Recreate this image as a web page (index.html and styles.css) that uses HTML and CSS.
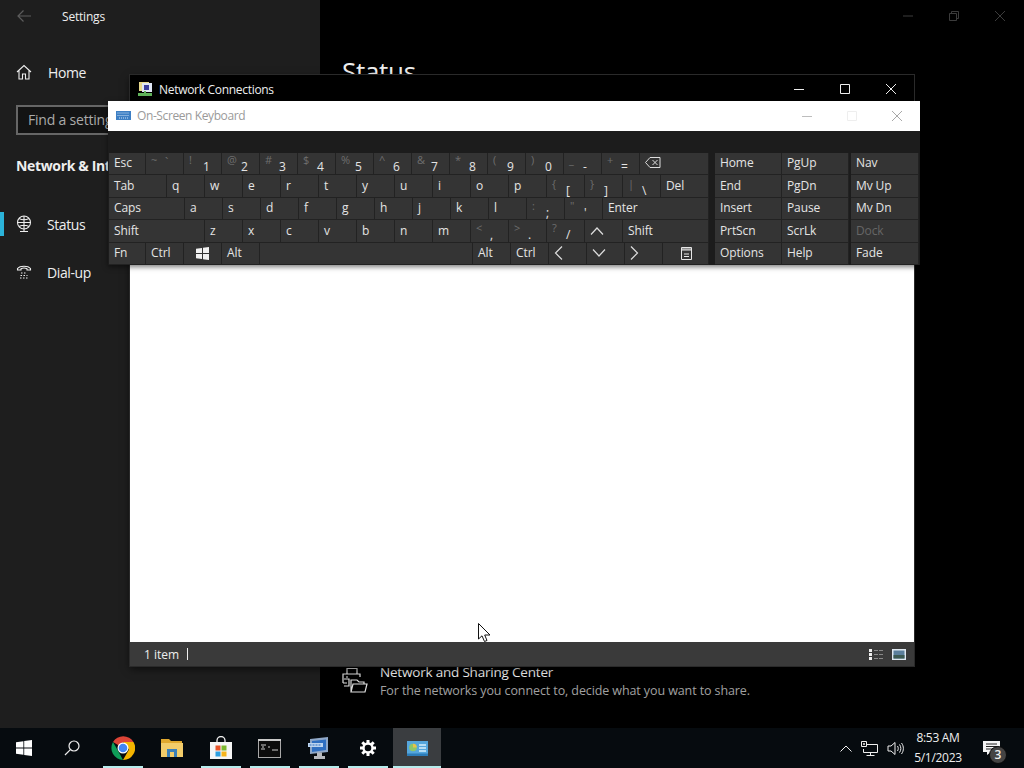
FILE: index.html
```html
<!DOCTYPE html>
<html lang="en">
<head>
	<meta charset="UTF-8">
	<title>On-Screen Keyboard</title>
	<link rel="stylesheet" href="styles.css">
</head>
<body>
	<div class="desktop">
		<div class="settings">
			<div class="sidebar">
				<div class="appTitle">
					<svg class="back" width="16" height="16" viewBox="0 0 16 16" fill="none" stroke="#5c5c5c" stroke-width="1.2"><path d="M15 8H2M7.500 2.500 2 8l5.500 5.500"/></svg>
					<span>Settings</span>
				</div>
				<div class="navItem homeItem">
					<svg width="16" height="16" viewBox="0 0 16 16" fill="none" stroke="#eee" stroke-width="1.100"><path d="M1 8 8 1.500 15 8M3 6.500V15H6.500V10H9.500V15H13V6.500"/></svg>
					<span>Home</span>
				</div>
				<div class="search">Find a setting</div>
				<h4 class="section">Network &amp; Internet</h4>
				<div class="navItem statusItem">
					<svg width="16" height="18" viewBox="0 0 16 18" fill="none" stroke="#eee" stroke-width="1.100"><circle cx="8" cy="7.500" r="6.500"/><path d="M1.500 7.500h13M8 1v13M3 3.500c3 1.500 7 1.500 10 0M3 11.500c3-1.500 7-1.500 10 0M4 16.500h8M8 14v2.500"/></svg>
					<span>Status</span>
				</div>
				<div class="navItem dialItem">
					<svg width="16" height="16" viewBox="0 0 16 16" fill="none" stroke="#eee" stroke-width="1.100"><path d="M1.500 6V4.500C4 1.500 12 1.500 14.500 4.500V6H11V4.800C9.500 4 6.500 4 5 4.800V6Z"/><path stroke-dasharray="1.500 1.500" d="M5 9h6M4.500 11.500h7M4 14h8"/></svg>
					<span>Dial-up</span>
				</div>
			</div>
			<div class="main">
				<div class="winBtns dim">
					<svg width="10" height="10" viewBox="0 0 10 10"><path d="M0 5h10" stroke="#3c3c3c"/></svg>
					<svg width="10" height="10" viewBox="0 0 10 10" fill="none" stroke="#3c3c3c"><path d="M.5 2.500h7v7h-7zM2.500 2.500v-2h7v7h-2"/></svg>
					<svg width="10" height="10" viewBox="0 0 10 10"><path d="M0 0l10 10M10 0 0 10" stroke="#3c3c3c"/></svg>
				</div>
				<h1 class="pageTitle">Status</h1>
				<div class="related">
					<svg width="26" height="26" viewBox="0 0 26 26" fill="none" stroke="#ddd" stroke-width="1.200"><path d="M5 7V1.500H15V7M1 16V7H18V10M1 16H5M2 19H7V12H2M4 10h2"/><path d="M9 25 11 17H25L23 25ZM9 25V13H15L17 15H22V17"/></svg>
					<div>
						<div class="relatedTitle">Network and Sharing Center</div>
						<div class="relatedSub">For the networks you connect to, decide what you want to share.</div>
					</div>
				</div>
			</div>
		</div>

		<div class="explorer">
			<div class="exTitle">
				<svg width="16" height="16" viewBox="0 0 16 16"><rect x="2" y="1" width="10" height="9" fill="#e8d88c"/><rect x="5" y="2" width="10" height="9" fill="#dfe6f5"/><rect x="7" y="4" width="5" height="5" fill="#3c3f9e"/><rect x="1" y="12" width="14" height="3" fill="#5fb25a"/><rect x="7" y="10" width="2" height="3" fill="#5fb25a"/></svg>
				<span class="exName">Network Connections</span>
				<div class="winBtns">
					<svg width="10" height="10" viewBox="0 0 10 10"><path d="M0 5.500h10" stroke="#eee"/></svg>
					<svg width="10" height="10" viewBox="0 0 10 10" fill="none" stroke="#eee"><path d="M.5.500h9v9h-9z"/></svg>
					<svg width="10" height="10" viewBox="0 0 10 10"><path d="M0 0l10 10M10 0 0 10" stroke="#eee"/></svg>
				</div>
			</div>
			<div class="exBody"></div>
			<div class="exStatus">
				<span>1 item</span>
				<i class="sep"></i>
				<span class="spring"></span>
				<svg width="16" height="12" viewBox="0 0 16 12"><path d="M1 1h3v3H1zM1 5h3v3H1zM1 9h3v3H1z" fill="#eee"/><path d="M6 2.500h4M11 2.500h4M6 6.500h4M11 6.500h4M6 10.500h4M11 10.500h4" stroke="#888"/></svg>
				<svg class="viewTile" width="14" height="11" viewBox="0 0 14 11"><rect width="14" height="11" fill="#dfe8f0"/><rect x="1.500" y="1.500" width="11" height="8" fill="#5b7f9c"/><rect x="1.500" y="6" width="11" height="3.500" fill="#3d5a52"/></svg>
			</div>
		</div>

		<div class="osk">
			<div class="oskTitle">
				<svg width="15" height="9" viewBox="0 0 15 9"><rect width="15" height="9" fill="#3d7fc4"/><path d="M1.500 2h12M1.500 4.500h12M3 7h9" stroke="#cfe3f7" stroke-dasharray="1 1"/></svg>
				<span class="oskName">On-Screen Keyboard</span>
				<div class="winBtns">
					<svg width="10" height="10" viewBox="0 0 10 10"><path d="M0 5.500h10" stroke="#bdbdbd"/></svg>
					<svg width="10" height="10" viewBox="0 0 10 10" fill="none" stroke="#eee"><path d="M.5.500h9v9h-9z"/></svg>
					<svg width="10" height="10" viewBox="0 0 10 10"><path d="M0 0l10 10M10 0 0 10" stroke="#a8a8a8"/></svg>
				</div>
			</div>
			<div class="oskBody">
				<div class="keys">
					<div class="row">
						<div class="key w37">Esc</div>
						<div class="key pair"><span class="sup">~</span><span class="dim">`</span></div>
						<div class="key pair"><span class="sup">!</span><span class="dig">1</span></div>
						<div class="key pair"><span class="sup">@</span><span class="dig">2</span></div>
						<div class="key pair"><span class="sup">#</span><span class="dig">3</span></div>
						<div class="key pair"><span class="sup">$</span><span class="dig">4</span></div>
						<div class="key pair"><span class="sup">%</span><span class="dig">5</span></div>
						<div class="key pair"><span class="sup">^</span><span class="dig">6</span></div>
						<div class="key pair"><span class="sup">&amp;</span><span class="dig">7</span></div>
						<div class="key pair"><span class="sup">*</span><span class="dig">8</span></div>
						<div class="key pair"><span class="sup">(</span><span class="dig">9</span></div>
						<div class="key pair"><span class="sup">)</span><span class="dig">0</span></div>
						<div class="key pair"><span class="sup">_</span><span class="dig">-</span></div>
						<div class="key pair"><span class="sup">+</span><span class="dig">=</span></div>
						<div class="key grow">
							<svg width="16" height="11" viewBox="0 0 16 11" fill="none" stroke="#ddd"><path d="M5 .500H15V10.500H5L.500 5.500ZM7.500 3l5 5M12.500 3l-5 5"/></svg>
						</div>
					</div>
					<div class="row">
						<div class="key w58">Tab</div>
						<div class="key">q</div>
						<div class="key">w</div>
						<div class="key">e</div>
						<div class="key">r</div>
						<div class="key">t</div>
						<div class="key">y</div>
						<div class="key">u</div>
						<div class="key">i</div>
						<div class="key">o</div>
						<div class="key">p</div>
						<div class="key pair"><span class="sup">{</span><span class="dig">[</span></div>
						<div class="key pair"><span class="sup">}</span><span class="dig">]</span></div>
						<div class="key pair"><span class="sup">|</span><span class="dig">\</span></div>
						<div class="key grow">Del</div>
					</div>
					<div class="row">
						<div class="key w76">Caps</div>
						<div class="key">a</div>
						<div class="key">s</div>
						<div class="key">d</div>
						<div class="key">f</div>
						<div class="key">g</div>
						<div class="key">h</div>
						<div class="key">j</div>
						<div class="key">k</div>
						<div class="key">l</div>
						<div class="key pair"><span class="sup">:</span><span class="dig">;</span></div>
						<div class="key pair"><span class="sup">"</span><span class="dig">'</span></div>
						<div class="key grow">Enter</div>
					</div>
					<div class="row">
						<div class="key w96">Shift</div>
						<div class="key">z</div>
						<div class="key">x</div>
						<div class="key">c</div>
						<div class="key">v</div>
						<div class="key">b</div>
						<div class="key">n</div>
						<div class="key">m</div>
						<div class="key pair"><span class="sup">&lt;</span><span class="dig">,</span></div>
						<div class="key pair"><span class="sup">&gt;</span><span class="dig">.</span></div>
						<div class="key pair"><span class="sup">?</span><span class="dig">/</span></div>
						<div class="key">
							<svg width="14" height="8" viewBox="0 0 14 8" fill="none" stroke="#ddd" stroke-width="1.200"><path d="M1 7.500 7 1l6 6.500"/></svg>
						</div>
						<div class="key grow">Shift</div>
					</div>
					<div class="row">
						<div class="key w37">Fn</div>
						<div class="key">Ctrl</div>
						<div class="key winKey">
							<svg width="13" height="13" viewBox="0 0 13 13" fill="#f2f2f2"><path d="M0 1.800 6 1V6H0ZM7 .8 13 0V6H7ZM0 7H6V12L0 11.200ZM7 7H13V13L7 12.200Z"/></svg>
						</div>
						<div class="key">Alt</div>
						<div class="key space"></div>
						<div class="key">Alt</div>
						<div class="key">Ctrl</div>
						<div class="key">
							<svg width="9" height="14" viewBox="0 0 9 14" fill="none" stroke="#ddd" stroke-width="1.200"><path d="M8 .5 1.500 7 8 13.500"/></svg>
						</div>
						<div class="key">
							<svg width="14" height="8" viewBox="0 0 14 8" fill="none" stroke="#ddd" stroke-width="1.200"><path d="M1 .5 7 7l6-6.500"/></svg>
						</div>
						<div class="key">
							<svg width="9" height="14" viewBox="0 0 9 14" fill="none" stroke="#ddd" stroke-width="1.200"><path d="M1 .5 7.500 7 1 13.500"/></svg>
						</div>
						<div class="key grow menuKey">
							<svg width="11" height="13" viewBox="0 0 11 13" fill="none" stroke="#e6e6e6"><path d="M.5.500h10v12H.5zM.5 3h10M.5 2h10M3 7h5M3 9.500h5"/></svg>
						</div>
					</div>
				</div>
				<div class="navKeys">
					<div class="key">Home</div><div class="key">PgUp</div><div class="key side">Nav</div>
					<div class="key">End</div><div class="key">PgDn</div><div class="key side">Mv Up</div>
					<div class="key">Insert</div><div class="key">Pause</div><div class="key side">Mv Dn</div>
					<div class="key">PrtScn</div><div class="key">ScrLk</div><div class="key side off">Dock</div>
					<div class="key">Options</div><div class="key">Help</div><div class="key side">Fade</div>
				</div>
			</div>
		</div>

		<svg class="cursor" width="13" height="19" viewBox="0 0 13 19"><path d="M.5.500V16L4 12.800 6.500 18.500 9 17.500 6.700 12H12Z" fill="#fff" stroke="#111"/></svg>

		<div class="taskbar">
			<div class="tbBtn startBtn">
				<svg width="16" height="16" viewBox="0 0 16 16" fill="#fff"><path d="M0 2.200 7.400 1.200V7.600H0ZM8.200 1 16 0V7.600H8.200ZM0 8.400H7.400V14.800L0 13.800ZM8.200 8.400H16V16L8.200 15Z"/></svg>
			</div>
			<div class="tbBtn searchBtn">
				<svg width="16" height="16" viewBox="0 0 16 16" fill="none" stroke="#eee" stroke-width="1.200"><circle cx="10" cy="6" r="5"/><path d="M6.400 9.600 1 15"/></svg>
			</div>
			<div class="tbBtn running">
				<svg width="24" height="24" viewBox="0 0 24 24"><path d="M12 12 2 6a12 12 0 0 1 20.500 0H12Z" fill="#dc4437"/><path d="M12 24A12 12 0 0 1 2 6l6 10.500Z" fill="#0f9d58"/><path d="M22.500 6A12 12 0 0 1 12 24l6-10.500L12 6Z" fill="#f4b400"/><circle cx="12" cy="12" r="5.500" fill="#fff"/><circle cx="12" cy="12" r="4.300" fill="#4285f4"/></svg>
			</div>
			<div class="tbBtn folderBtn">
				<svg width="22" height="20" viewBox="0 0 22 20"><path d="M0 1H8L10 3H21V6H0Z" fill="#e0a82e"/><rect y="5" width="22" height="14" fill="#f2cc6a"/><rect x="6" y="11" width="10" height="8" fill="#3b7fb8"/><rect x="9" y="14" width="4" height="5" fill="#f2cc6a"/></svg>
			</div>
			<div class="tbBtn running">
				<svg width="24" height="24" viewBox="0 0 24 24"><path d="M8 7V4.500a4 4 0 0 1 8 0V7" fill="none" stroke="#eee" stroke-width="1.300"/><rect x="1" y="6" width="22" height="17" fill="#f6f6f6"/><rect x="6.500" y="9.500" width="5" height="5" fill="#e8542a"/><rect x="12.500" y="9.500" width="5" height="5" fill="#7cb82f"/><rect x="6.500" y="15.500" width="5" height="5" fill="#2e9fe0"/><rect x="12.500" y="15.500" width="5" height="5" fill="#f6b51c"/></svg>
			</div>
			<div class="tbBtn running">
				<svg width="23" height="19" viewBox="0 0 23 19"><rect x=".5" y=".5" width="22" height="18" fill="#0c0c0c" stroke="#a8a8a8"/><path d="M0 0h23v2H0z" fill="#c9c9c9"/><path d="M3 6h5M4 8h2M10 8h2M3 10h4M14 11h6" stroke="#ccc"/></svg>
			</div>
			<div class="tbBtn running">
				<svg width="24" height="24" viewBox="0 0 24 24"><path d="M3 3 21 1V16L3 18Z" fill="#8fa8c8"/><path d="M5 5 19 3.500V14L5 16Z" fill="#2f6fc0"/><path d="M1 7H16V11H1Z" fill="#bcd4ee"/><path d="M2.500 9h12" stroke="#2f6fc0" stroke-dasharray="2 1"/><path d="M10 16.500h5V20h3v3H7V20h3Z" fill="#b5b8bd"/></svg>
			</div>
			<div class="tbBtn running">
				<svg width="18" height="18" viewBox="0 0 18 18"><path d="M9 1v3M9 14v3M1 9h3M14 9h3M3.300 3.300l2.200 2.200M12.500 12.500l2.200 2.200M14.700 3.300l-2.200 2.200M5.500 12.500l-2.200 2.200" stroke="#fff" stroke-width="3"/><circle cx="9" cy="9" r="4.500" fill="none" stroke="#fff" stroke-width="2.400"/></svg>
			</div>
			<div class="tbBtn active">
				<svg width="21" height="15" viewBox="0 0 21 15"><rect width="21" height="15" fill="#55a6dc"/><circle cx="6" cy="6.500" r="3.800" fill="#8cc66a"/><path d="M6 6.500V2.700a3.800 3.800 0 0 1 3.800 3.800Z" fill="#e8c24a"/><path d="M12 4h7M12 7h7M12 10h7" stroke="#d8effa" stroke-width="1.300"/><rect y="12.500" width="21" height="2.500" fill="#2c7cb8"/></svg>
			</div>
			<div class="spring"></div>
			<div class="tray">
				<svg width="12" height="7" viewBox="0 0 12 7" fill="none" stroke="#eee"><path d="M.5 6.500 6 1l5.500 5.500"/></svg>
				<svg width="17" height="15" viewBox="0 0 17 15" fill="none" stroke="#eee"><path d="M4 3.500H16.500V11.500H2.500V8M9.500 11.500V14.500M5.500 14.500H13.500"/><path d="M.5.500h5v5h-5z" fill="#0a0e12"/><circle cx="3" cy="3" r="1" fill="#eee" stroke="none"/></svg>
				<svg width="17" height="15" viewBox="0 0 17 15" fill="none" stroke="#eee"><path d="M1 5V10H4L8 13.500V1.500L4 5ZM10.500 5c1 1.500 1 3.500 0 5M12.500 3.500c1.800 2.500 1.800 5.500 0 8M14.500 2c2.500 3.500 2.500 7.500 0 11"/></svg>
			</div>
			<div class="clock">
				<div>8:53 AM</div>
				<div>5/1/2023</div>
			</div>
			<div class="notify">
				<svg width="17" height="14" viewBox="0 0 17 14"><path d="M0 0H17V11H8L4 14V11H0Z" fill="#f4f4f4"/><path d="M3 3h11M3 5.500h11M3 8h8" stroke="#222"/></svg>
				<span class="badge">3</span>
			</div>
		</div>
	</div>
</body>
</html>
```

FILE: styles.css
```css
* {
	box-sizing: border-box;
}
html, body {
	margin: 0;
	padding: 0;
	background: #000;
}
body {
	font-family: "Open Sans", "Liberation Sans", sans-serif;
	color: #eee;
}
.desktop {
	position: relative;
	width: 1024px;
	height: 768px;
	overflow: hidden;
	display: flex;
	flex-direction: column;
}
.spring {
	flex: 1;
}

/* settings window behind everything */
.settings {
	flex: 1;
	display: flex;
	min-height: 0;
}
.sidebar {
	width: 320px;
	background: #1e1e1e;
}
.appTitle {
	display: flex;
	align-items: center;
	height: 32px;
	padding-left: 16px;
	font-size: 12px;
	letter-spacing: -.2px;
}
.appTitle .back {
	margin-right: 30px;
}
.navItem {
	display: flex;
	align-items: center;
	gap: 15px;
	font-size: 14px;
	letter-spacing: -.4px;
	padding-left: 16px;
}
.homeItem {
	height: 24px;
	margin-top: 28px;
	gap: 16px;
}
.search {
	width: 288px;
	height: 30px;
	margin: 21px 0 0 16px;
	border: 2px solid #666;
	background: #131313;
	padding-left: 10px;
	font-size: 14px;
	letter-spacing: -.2px;
	line-height: 25px;
	color: #aaa;
}
.section {
	margin: 19px 0 0 16px;
	font-size: 14px;
	line-height: 24px;
	font-weight: 700;
	letter-spacing: -.35px;
}
.statusItem {
	height: 24px;
	margin-top: 34px;
	box-shadow: inset 4px 0 0 #2bb3d9;
}
.dialItem {
	height: 24px;
	margin-top: 24px;
}
.main {
	flex: 1;
	position: relative;
	background: #000;
	padding: 0 0 0 22px;
}
.pageTitle {
	margin: 53px 0 0;
	font-size: 26px;
	line-height: 36px;
	font-weight: 400;
	letter-spacing: -.3px;
}
.related {
	display: flex;
	align-items: flex-start;
	gap: 12px;
	margin-top: 573px;
}
.related svg {
	margin-top: 5px;
}
.relatedTitle {
	font-size: 13.500px;
	line-height: 20px;
	letter-spacing: -.2px;
}
.relatedSub {
	font-size: 12.500px;
	line-height: 18px;
	letter-spacing: -.1px;
	color: #a0a0a0;
}
.winBtns {
	display: flex;
	gap: 36px;
}
.winBtns.dim {
	position: absolute;
	top: 11px;
	right: 19px;
}

/* windows, placed freely on the desktop */
.explorer {
	position: absolute;
	left: 130px;
	top: 75px;
	width: 784px;
	height: 591px;
	display: flex;
	flex-direction: column;
	box-shadow: 0 0 0 1px #2a2a2a, 0 3px 8px rgba(0, 0, 0, .6);
}
.exTitle {
	display: flex;
	align-items: center;
	height: 26px;
	padding: 2px 18px 0 7px;
	background: #000;
	font-size: 12px;
}
.exName {
	flex: 1;
	margin-left: 6px;
	letter-spacing: -.3px;
}
.exBody {
	flex: 1;
	background: #fff;
}
.exStatus {
	display: flex;
	align-items: center;
	gap: 8px;
	height: 24px;
	padding: 0 8px 0 14px;
	background: #3a3a3a;
	font-size: 12px;
}
.exStatus .sep {
	width: 1px;
	height: 12px;
	background: #eee;
}
.osk {
	position: absolute;
	left: 108px;
	top: 101px;
	width: 812px;
	height: 164px;
	box-shadow: 0 2px 5px rgba(0, 0, 0, .5);
}
.oskTitle {
	display: flex;
	align-items: center;
	height: 30px;
	padding: 0 18px 1px 8px;
	background: #fff;
	font-size: 12px;
}
.oskName {
	flex: 1;
	margin-left: 6px;
	color: #9a9a9a;
	letter-spacing: -.4px;
}
.oskTitle .winBtns {
	gap: 35px;
}
.oskBody {
	display: flex;
	gap: 6px;
	height: 134px;
	padding: 22px 1px 0;
	background: #1c1c1c;
}
.keys {
	width: 600px;
	height: 112px;
	display: flex;
	flex-direction: column;
}
.row {
	flex: none;
	height: 22.400px;
	display: flex;
}
.key {
	display: flex;
	align-items: center;
	width: 38px;
	padding-left: 5px;
	background: #343434;
	border-right: 1px solid #222;
	border-bottom: 1px solid #222;
	font-size: 12px;
	letter-spacing: -.1px;
	line-height: 14px;
	color: #e4e4e4;
}
.row:first-child .key,
.navKeys .key:nth-child(-n+3) {
	padding-bottom: 2px;
}
.w37 { width: 37px; }
.w58 { width: 58px; }
.w76 { width: 76px; }
.w96 { width: 96px; }
.winKey { padding-left: 12px; }
.space { width: 213px; }
.grow { flex: 1; }
.menuKey { padding-left: 18px; }
.sup {
	width: 14px;
	margin-top: -5px;
	font-size: 11px;
	color: #6e6e6e;
}
.dig {
	margin-top: 9px;
}
.dim {
	color: #6e6e6e;
}
.navKeys {
	flex: 1;
	height: 112px;
	display: grid;
	grid-template-columns: 67px 67px 70px;
	grid-template-rows: repeat(5, 22.400px);
}
.navKeys .key {
	width: auto;
}
.navKeys .key.side {
	margin-left: 2px;
}
.off {
	color: #666;
}
.cursor {
	position: absolute;
	left: 478px;
	top: 623px;
}

/* taskbar */
.taskbar {
	display: flex;
	align-items: center;
	height: 40px;
	background: #060b0f;
}
.tbBtn {
	display: flex;
	align-items: center;
	justify-content: center;
	width: 49px;
	height: 40px;
	flex-shrink: 0;
}
.startBtn {
	width: 48px;
}
.searchBtn {
	width: 51px;
	padding-right: 3px;
}
.folderBtn {
	padding-right: 1px;
}
.tbBtn.running {
	padding-right: 2px;
	background: linear-gradient(#b6ecec, #b6ecec) left 4px bottom 0 / 40px 2px no-repeat;
}
.tbBtn.active {
	background: linear-gradient(#b6ecec, #b6ecec) left 0 bottom 0 / 48px 2px no-repeat, linear-gradient(#3a3d40, #3a3d40) left 0 top 0 / 48px 100% no-repeat;
}
.tray {
	display: flex;
	align-items: center;
	gap: 9px;
	margin-right: 3px;
}
.clock {
	width: 62px;
	margin-right: 7px;
	text-align: center;
	font-size: 12px;
	line-height: 20px;
	letter-spacing: -.3px;
}
.notify {
	position: relative;
	width: 48px;
	height: 40px;
	padding-left: 7px;
	display: flex;
	align-items: center;
}
.badge {
	position: absolute;
	left: 13px;
	top: 18px;
	width: 18px;
	height: 18px;
	border-radius: 50%;
	background: #444;
	border: 1px solid #0a0a0a;
	font-size: 12px;
	font-weight: 600;
	line-height: 16px;
	text-align: center;
}
```
